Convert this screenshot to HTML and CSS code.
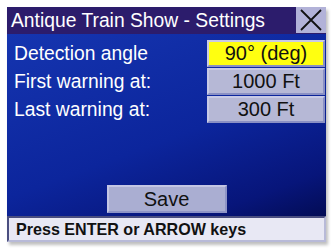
FILE: index.html
```html
<!DOCTYPE html>
<html>
<head>
<meta charset="utf-8">
<link rel="stylesheet" href="styles.css">
</head>
<body>
<div class="frame">
  <div class="titlebar">
    <div class="title">Antique Train Show - Settings</div>
    <div class="close">
      <svg width="24" height="24" viewBox="0 0 24 24"><path d="M2 2 L22 22 M22 2 L2 22" stroke="#111" stroke-width="1.8" fill="none"/></svg>
    </div>
  </div>
  <div class="main">
    <div class="rows">
      <div class="row"><span class="label">Detection angle</span><span class="value active">90° (deg)</span></div>
      <div class="row"><span class="label">First warning at:</span><span class="value">1000 Ft</span></div>
      <div class="row"><span class="label">Last warning at:</span><span class="value">300 Ft</span></div>
    </div>
    <div class="save">Save</div>
  </div>
  <div class="status">Press ENTER or ARROW keys</div>
</div>
</body>
</html>
```
FILE: styles.css
```css
html, body { margin: 0; padding: 0; background: #fff; }
body { width: 332px; height: 248px; overflow: hidden; font-family: "Liberation Sans", Arial, sans-serif; }
.frame {
  margin: 7px 0 0 7px;
  width: 319px;
  height: 235px;
  display: flex;
  flex-direction: column;
  box-shadow: 2px 3px 3px rgba(0,0,0,0.25);
}
.titlebar {
  height: 27px;
  background: #2c1c6c;
  display: flex;
  align-items: center;
  justify-content: space-between;
}
.title { color: #fff; font-size: 19.3px; padding-left: 4px; }
.close {
  width: 30px; height: 26px;
  background: #b2b2d8;
  display: flex; align-items: center; justify-content: center;
  align-self: flex-start;
}
.main {
  flex: 1;
  background: linear-gradient(160deg, #1535b0 0%, #0c259c 55%, #07157a 85%, #030c55 100%);
  display: flex;
  flex-direction: column;
  justify-content: space-between;
  align-items: center;
  padding: 6px 0 3px 0;
}
.rows { width: 100%; display: flex; flex-direction: column; gap: 1px; }
.row { display: flex; justify-content: space-between; align-items: center; height: 27px; }
.label { color: #fff; font-size: 19.3px; padding-left: 7px; }
.value {
  width: 114px; height: 23px;
  margin-right: 1px;
  background: #b6b8d6;
  border: 2px solid #8a90c4;
  border-top-color: #c8cae6;
  border-left-color: #c8cae6;
  color: #111;
  font-size: 20px;
  display: flex; align-items: center; justify-content: center;
}
.value.active { background: #ffff10; }
.save {
  width: 116px; height: 24px;
  background: #aaaed2;
  border: 2px solid #8e94c6;
  border-top-color: #c4c6e4;
  border-left-color: #c4c6e4;
  color: #111;
  font-size: 20px;
  display: flex; align-items: center; justify-content: center;
}
.status {
  height: 22px;
  background: #e8e8f4;
  border: 2px solid #4a4e80;
  border-bottom-color: #b8bad8;
  border-right-color: #b8bad8;
  font-weight: bold;
  font-size: 16.1px;
  color: #111;
  padding-left: 7px;
  display: flex; align-items: center;
}
```
